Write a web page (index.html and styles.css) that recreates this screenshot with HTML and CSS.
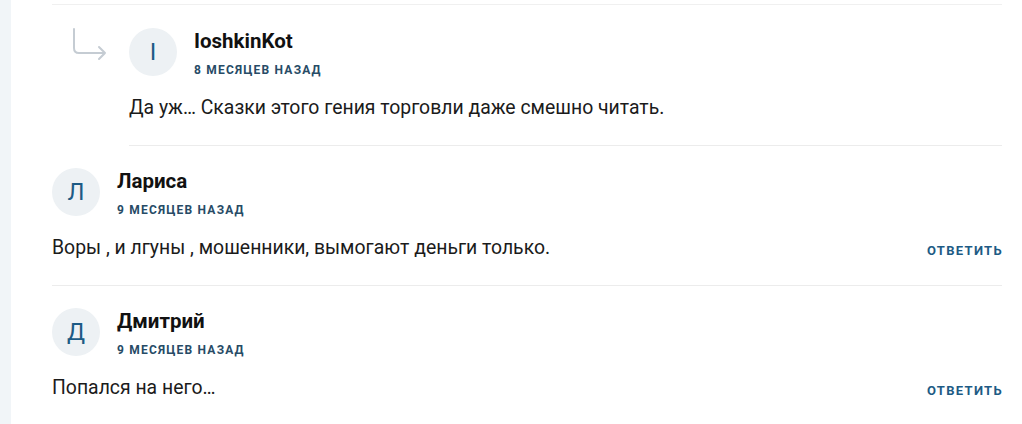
FILE: index.html
```html
<!DOCTYPE html>
<html lang="ru">
<head>
    <meta charset="UTF-8">
    <title>Комментарии</title>
    <link rel="stylesheet" href="styles.css">
</head>
<body>
    <div class="page">
        <div class="side"></div>
        <div class="comments">
            <div class="comment reply">
                <svg class="reply-arrow" width="36" height="34" viewBox="0 0 36 34">
                    <path d="M2 1 V20 Q2 25 7 25 H33 M27 19 L33 25 L27 31" fill="none" stroke="#c5ccd3" stroke-width="2" stroke-linecap="round" stroke-linejoin="round"/>
                </svg>
                <div class="body">
                    <div class="head">
                        <div class="avatar">I</div>
                        <div class="meta">
                            <div class="name">IoshkinKot</div>
                            <div class="date">8 месяцев назад</div>
                        </div>
                    </div>
                    <div class="row">
                        <p class="text">Да уж… Сказки этого гения торговли даже смешно читать.</p>
                    </div>
                </div>
            </div>
            <div class="comment">
                <div class="body">
                    <div class="head">
                        <div class="avatar">Л</div>
                        <div class="meta">
                            <div class="name">Лариса</div>
                            <div class="date">9 месяцев назад</div>
                        </div>
                    </div>
                    <div class="row">
                        <p class="text">Воры , и лгуны , мошенники, вымогают деньги только.</p>
                        <a class="answer" href="#">Ответить</a>
                    </div>
                </div>
            </div>
            <div class="comment">
                <div class="body">
                    <div class="head">
                        <div class="avatar">Д</div>
                        <div class="meta">
                            <div class="name">Дмитрий</div>
                            <div class="date">9 месяцев назад</div>
                        </div>
                    </div>
                    <div class="row">
                        <p class="text">Попался на него…</p>
                        <a class="answer" href="#">Ответить</a>
                    </div>
                </div>
            </div>
        </div>
    </div>
</body>
</html>
```
FILE: styles.css
```css
body { margin: 0; font-family: Roboto, "Liberation Sans", sans-serif; color: #1b1b1b; background: #fff; }
.page { display: flex; height: 424px; overflow: hidden; }
.side { width: 11px; background-color: #f1f5f8; flex-shrink: 0; }
.comments { flex: 1; padding: 4px 20px 0 41px; }
.comment { border-top: 1px solid #ececec; padding: 22px 0 24px; display: flex; }
.comment.reply { padding: 23px 0 0 20px; border-top-color: #f0f0f0; }
.reply-arrow { flex-shrink: 0; margin: 0 21px 0 0; }
.comment.reply + .comment { border-top: none; }
.comment.reply .body { border-bottom: 1px solid #ececec; padding-bottom: 24px; }
.body { flex: 1; }
.head { display: flex; align-items: flex-start; gap: 17px; }
.avatar { width: 48px; height: 48px; border-radius: 50%; background-color: #edf1f4; color: #1d5b85; font-size: 24px; display: flex; align-items: center; justify-content: center; flex-shrink: 0; }
.meta { display: flex; flex-direction: column; }
.name { font-size: 20.5px; font-weight: bold; color: #111; line-height: 24px; margin-top: 1px; }
.date { font-size: 12px; line-height: 14px; font-weight: bold; text-transform: uppercase; letter-spacing: 1.2px; color: #274b66; margin-top: 10px; }
.row { display: flex; align-items: center; justify-content: space-between; margin-top: 18px; }
.text { margin: 0; font-size: 19.4px; line-height: 26px; color: #1b1b1b; }
.answer { font-size: 13px; font-weight: bold; text-transform: uppercase; letter-spacing: 1.3px; color: #1d5b85; text-decoration: none; margin-top: 4px; margin-right: -1px; }
```
